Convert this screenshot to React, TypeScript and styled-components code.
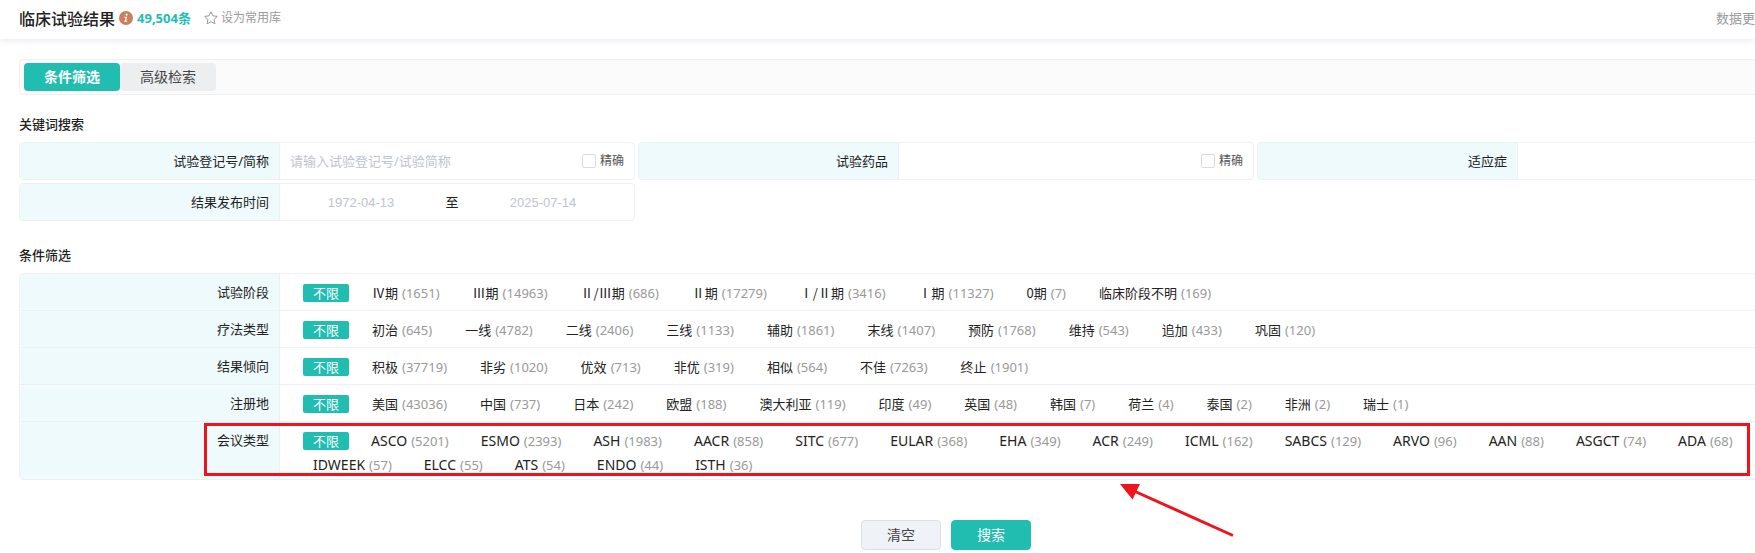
import React from 'react';
import styled, { createGlobalStyle } from 'styled-components';

const teal = '#20bdb0';
const line = '#eef0f2';
const tint = '#eefafc';
const mark = '#ee131d';
const cjk = "'Noto Sans CJK SC', sans-serif";

const GlobalStyle = createGlobalStyle`
  * { box-sizing: border-box; }
  body {
    margin: 0;
    background: #fff;
    color: #222;
    font: 13px/18px 'Noto Sans', ${cjk};
  }
  button, input { font: inherit; color: inherit; }
  button { border: 0; padding: 0; background: none; cursor: pointer; white-space: nowrap; }
`;

const Shell = styled.div`
  overflow: hidden;
`;

const Header = styled.header`
  display: flex;
  align-items: center;
  height: 39px;
  padding-left: 19px;
  padding-bottom: 4px;
  box-shadow: 0 1px 8px rgba(30, 60, 90, 0.12);
`;

const PageTitle = styled.h1`
  margin: 0;
  font: 500 16px/24px ${cjk};
`;

const InfoIcon = styled.svg`
  width: 14px;
  height: 14px;
  margin: 0 4px;
`;

const Total = styled.strong`
  color: ${teal};
  font-weight: 700;
`;

const Favorite = styled.button`
  display: flex;
  align-items: center;
  gap: 3px;
  margin-left: 13px;
  color: #999;
  font-size: 12px;
  line-height: 20px;
`;

const Updated = styled.span`
  margin-left: auto;
  color: #999;
`;

/* The form keeps its desktop width; narrower windows cut it at the right. */
const Main = styled.main`
  min-width: 1892px;
  padding: 20px 19px 3px;
`;

const TabBar = styled.nav`
  display: flex;
  padding: 3px 4px;
  border: 1px solid ${line};
  border-radius: 4px;
  background: #fbfbfb;
`;

const Tab = styled.button<{ $active?: boolean }>`
  width: 96px;
  height: 28px;
  border-radius: 4px;
  font-size: 14px;
  font-weight: ${p => (p.$active ? 700 : 400)};
  color: ${p => (p.$active ? '#fff' : '#444')};
  background: ${p => (p.$active ? teal : '#edeef0')};
`;

const SectionTitle = styled.h2`
  margin: 0;
  padding: 20px 0 9px;
  font: 500 13px/18px ${cjk};
`;

const Fields = styled.div`
  display: grid;
  grid-template-columns: repeat(3, 1fr);
  gap: 3px;
  margin-bottom: 5px;
`;

const Field = styled.div`
  display: flex;
  height: 38px;
  border: 1px solid ${line};
  border-radius: 4px;
  overflow: hidden;
`;

const FieldLabel = styled.label`
  flex: none;
  width: 260px;
  padding-right: 10px;
  border-right: 1px solid ${line};
  background: ${tint};
  text-align: right;
  line-height: 36px;
`;

const FieldBody = styled.div`
  flex: 1;
  display: flex;
  align-items: center;
  min-width: 0;
  padding-right: 10px;
`;

const TextInput = styled.input`
  flex: 1;
  min-width: 0;
  height: 32px;
  padding: 0 10px;
  border: 0;
  outline: 0;
  background: none;
  &::placeholder { color: #c0c4cc; opacity: 1; }
`;

const DateInput = styled(TextInput)`
  padding: 0;
  text-align: center;
  font-family: 'Liberation Sans', sans-serif;
`;

const DateJoin = styled.span`
  width: 20px;
  text-align: center;
`;

const Exact = styled.label`
  display: flex;
  align-items: center;
  gap: 4px;
  color: #555;
  font-size: 12px;
`;

const Tick = styled.input`
  appearance: none;
  width: 14px;
  height: 14px;
  margin: 0;
  border: 1px solid #d8dbe4;
  border-radius: 2px;
  background: #fff;
  &:checked { background: ${teal}; }
`;

const Filters = styled.div`
  position: relative;
  border: 1px solid ${line};
  border-radius: 4px;
`;

const FilterRow = styled.div`
  display: flex;
  min-height: 36px;
  & + & { border-top: 1px solid ${line}; min-height: 37px; }
`;

const FilterLabel = styled.div`
  flex: none;
  width: 260px;
  padding: 9px 10px 0 0;
  border-right: 1px solid ${line};
  border-radius: 4px 0 0 4px;
  background: ${tint};
  text-align: right;
`;

const Options = styled.div<{ $tight?: boolean }>`
  display: flex;
  flex-wrap: wrap;
  gap: 6px ${p => (p.$tight ? '12px' : '13px')};
  padding: 10px 80px 5px 23px;
`;

const Option = styled.button<{ $active?: boolean }>`
  display: flex;
  align-items: baseline;
  gap: 4px;
  height: 18px;
  padding: 0 10px;
  border-radius: 2px;
  color: ${p => (p.$active ? '#fff' : '#222')};
  background: ${p => (p.$active ? teal : 'transparent')};
`;

const Name = styled.span<{ $script?: 'phase' | 'latin' }>`
  font-family: ${p => (p.$script === 'phase' ? cjk : 'inherit')};
  font-size: ${p => (p.$script === 'latin' ? '14px' : '13px')};
`;

const Count = styled.span`
  color: #999;
`;

const Actions = styled.div`
  display: flex;
  justify-content: center;
  gap: 10px;
  padding-top: 40px;
`;

const Action = styled.button<{ $primary?: boolean }>`
  width: 80px;
  height: 30px;
  border: 1px solid ${p => (p.$primary ? teal : '#dcdfe6')};
  border-radius: 4px;
  background: ${p => (p.$primary ? teal : '#eff3f8')};
  color: ${p => (p.$primary ? '#fff' : '#444')};
  font-size: 14px;
`;

/* Annotation drawn over the conference row. */
const Frame = styled.div`
  position: absolute;
  left: 184px;
  right: 122px;
  bottom: 3px;
  height: 53px;
  border: 3px solid ${mark};
  pointer-events: none;
`;

const Arrow = styled.svg`
  position: absolute;
  left: 1100px;
  top: 100%;
  margin-top: 5px;
  width: 115px;
  height: 54px;
  pointer-events: none;
`;

type Item = [string, number];
type Group = { label: string; script?: 'phase' | 'latin'; items: Item[] };

const groups: Group[] = [
  {
    label: '试验阶段',
    script: 'phase',
    items: [['Ⅳ期', 1651], ['Ⅲ期', 14963], ['Ⅱ/Ⅲ期', 686], ['Ⅱ期', 17279], ['Ⅰ/Ⅱ期', 3416], ['Ⅰ期', 11327], ['0期', 7], ['临床阶段不明', 169]],
  },
  {
    label: '疗法类型',
    items: [['初治', 645], ['一线', 4782], ['二线', 2406], ['三线', 1133], ['辅助', 1861], ['末线', 1407], ['预防', 1768], ['维持', 543], ['追加', 433], ['巩固', 120]],
  },
  {
    label: '结果倾向',
    items: [['积极', 37719], ['非劣', 1020], ['优效', 713], ['非优', 319], ['相似', 564], ['不佳', 7263], ['终止', 1901]],
  },
  {
    label: '注册地',
    items: [['美国', 43036], ['中国', 737], ['日本', 242], ['欧盟', 188], ['澳大利亚', 119], ['印度', 49], ['英国', 48], ['韩国', 7], ['荷兰', 4], ['泰国', 2], ['非洲', 2], ['瑞士', 1]],
  },
  {
    label: '会议类型',
    script: 'latin',
    items: [['ASCO', 5201], ['ESMO', 2393], ['ASH', 1983], ['AACR', 858], ['SITC', 677], ['EULAR', 368], ['EHA', 349], ['ACR', 249], ['ICML', 162], ['SABCS', 129], ['ARVO', 96], ['AAN', 88], ['ASGCT', 74], ['ADA', 68], ['IDWEEK', 57], ['ELCC', 55], ['ATS', 54], ['ENDO', 44], ['ISTH', 36]],
  },
];

function ExactTick() {
  return (
    <Exact>
      <Tick type="checkbox" />
      精确
    </Exact>
  );
}

export default function App() {
  return (
    <Shell lang="zh-CN">
      <GlobalStyle />
      <Header>
        <PageTitle>临床试验结果</PageTitle>
        <InfoIcon viewBox="0 0 14 14" aria-hidden="true">
          <circle cx="7" cy="7" r="7" fill="#c9805c" />
          <circle cx="7.6" cy="3.6" r="1.1" fill="#fff" />
          <path d="M5.4 5.8h2.7l-.9 4h1v1H5.3v-1h.6l.7-3H5.4z" fill="#fff" />
        </InfoIcon>
        <Total>49,504条</Total>
        <Favorite type="button">
          <svg width="14" height="14" viewBox="0 0 14 14" fill="none" stroke="#999" strokeLinejoin="round" aria-hidden="true">
            <path d="M7 .8l1.900 4 4.400.6-3.200 3 .8 4.400L7 10.700l-3.900 2.100.8-4.400-3.200-3 4.400-.6z" />
          </svg>
          设为常用库
        </Favorite>
        <Updated>数据更</Updated>
      </Header>
      <Main>
        <TabBar>
          <Tab type="button" $active>条件筛选</Tab>
          <Tab type="button">高级检索</Tab>
        </TabBar>

        <SectionTitle>关键词搜索</SectionTitle>
        <Fields>
          <Field>
            <FieldLabel htmlFor="trial">试验登记号/简称</FieldLabel>
            <FieldBody>
              <TextInput id="trial" placeholder="请输入试验登记号/试验简称" />
              <ExactTick />
            </FieldBody>
          </Field>
          <Field>
            <FieldLabel htmlFor="drug">试验药品</FieldLabel>
            <FieldBody>
              <TextInput id="drug" />
              <ExactTick />
            </FieldBody>
          </Field>
          <Field>
            <FieldLabel htmlFor="indication">适应症</FieldLabel>
            <FieldBody>
              <TextInput id="indication" />
            </FieldBody>
          </Field>
          <Field>
            <FieldLabel htmlFor="from">结果发布时间</FieldLabel>
            <FieldBody>
              <DateInput id="from" placeholder="1972-04-13" />
              <DateJoin>至</DateJoin>
              <DateInput id="to" aria-label="结果发布时间" placeholder="2025-07-14" />
            </FieldBody>
          </Field>
        </Fields>

        <SectionTitle>条件筛选</SectionTitle>
        <Filters>
          {groups.map(group => (
            <FilterRow key={group.label} role="group" aria-label={group.label}>
              <FilterLabel>{group.label}</FilterLabel>
              <Options $tight={group.script === 'latin'}>
                <Option type="button" $active>不限</Option>
                {group.items.map(([name, count]) => (
                  <Option type="button" key={name}>
                    <Name $script={group.script}>{name}</Name>
                    <Count>({count})</Count>
                  </Option>
                ))}
              </Options>
            </FilterRow>
          ))}
          <Frame />
          <Arrow viewBox="0 0 115 54" aria-hidden="true">
            <path d="M0 0h20l-7.500 15.500z" fill={mark} />
            <path d="M14 7l99 44.500" stroke={mark} strokeWidth="3" />
          </Arrow>
        </Filters>

        <Actions>
          <Action type="reset">清空</Action>
          <Action type="submit" $primary>搜索</Action>
        </Actions>
      </Main>
    </Shell>
  );
}
